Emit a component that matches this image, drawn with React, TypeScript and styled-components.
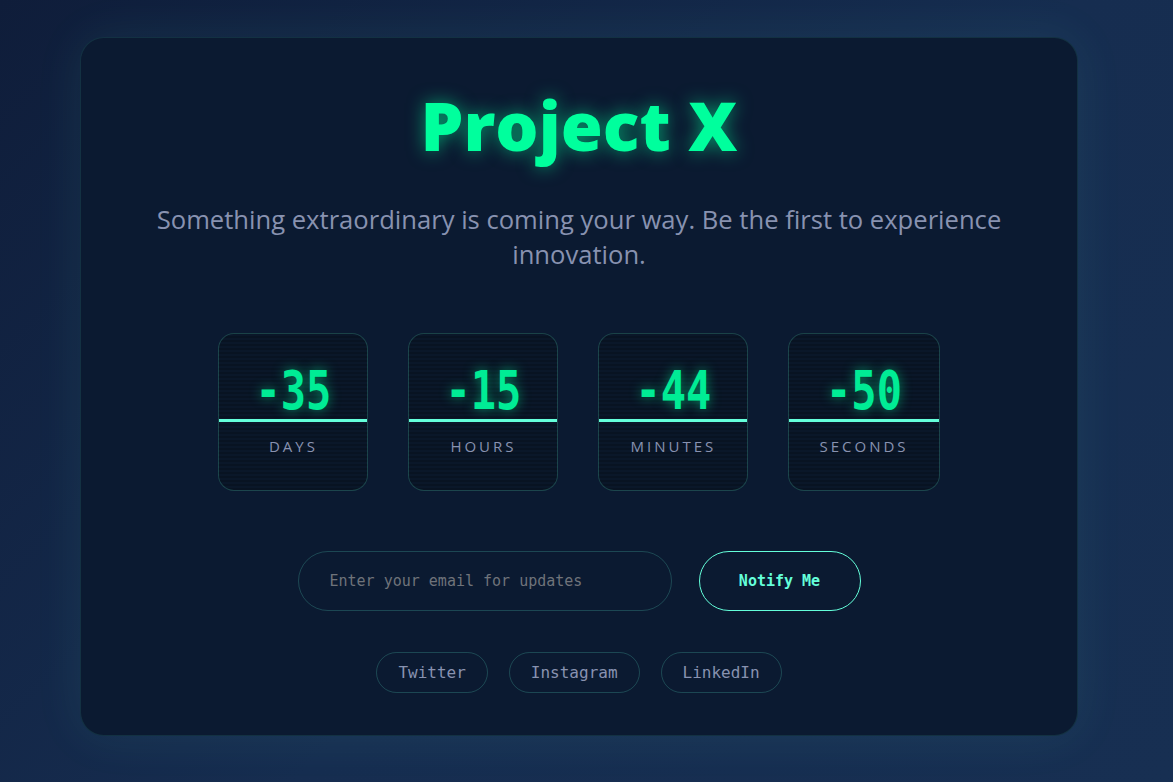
import React from "react";
import styled, { createGlobalStyle } from "styled-components";

const GlobalStyle = createGlobalStyle`
  html, body { margin: 0; padding: 0; }
  body {
    background: linear-gradient(135deg, #0f1d3a 0%, #162d50 55%, #172f52 100%);
    min-height: 100vh;
  }
  * { box-sizing: border-box; }
`;

const Page = styled.div`
  min-height: 100vh;
  display: flex;
  align-items: flex-start;
  padding: 37px 95px 48px 80px;
`;

const Card = styled.main`
  flex: 1;
  background: #0b1a31;
  border: 1px solid rgba(100, 255, 218, 0.1);
  border-radius: 24px;
  box-shadow: 0 0 50px rgba(100, 255, 218, 0.08);
  padding: 44px 60px 42px;
  display: flex;
  flex-direction: column;
  align-items: center;
  text-align: center;
`;

const Title = styled.h1`
  margin: 0;
  font-family: "Open Sans", "Noto Sans", sans-serif;
  font-weight: 800;
  font-size: 68px;
  line-height: 86px;
  color: #00ff9d;
  text-shadow: 0 0 18px rgba(0, 255, 157, 0.55);
`;

const Subtitle = styled.p`
  margin: 34px 0 0;
  max-width: 870px;
  font-family: "Open Sans", "Noto Sans", sans-serif;
  font-weight: 400;
  font-size: 25.6px;
  line-height: 35px;
  color: #8892b0;
`;

const Counters = styled.div`
  display: flex;
  gap: 40px;
  margin-top: 61px;
`;

const Box = styled.div`
  min-width: 150px;
  height: 158px;
  display: flex;
  flex-direction: column;
  border: 1px solid rgba(100, 255, 218, 0.2);
  border-radius: 16px;
  overflow: hidden;
  background:
    repeating-linear-gradient(0deg, rgba(0, 0, 0, 0.18) 0 2px, transparent 2px 4px),
    #0a1729;
`;

const Number = styled.div`
  height: 85px;
  display: flex;
  align-items: center;
  justify-content: center;
  padding-top: 28px;
`;

const Digits = styled.span`
  display: inline-block;
  font-family: "DejaVu Sans Mono", monospace;
  font-weight: 700;
  font-size: 42px;
  line-height: 1;
  color: #00ec95;
  transform: scaleY(1.25);
  text-shadow: 0 0 10px rgba(0, 255, 157, 0.5);
`;

const Divider = styled.div`
  height: 3px;
  background: #64ffda;
`;

const Label = styled.div`
  flex: 1;
  padding: 14px 30px 0;
  font-family: "Open Sans", "Noto Sans", sans-serif;
  font-size: 15px;
  letter-spacing: 3px;
  text-transform: uppercase;
  color: #8892b0;
`;

const Form = styled.form`
  display: flex;
  gap: 27px;
  margin-top: 60px;
`;

const Email = styled.input`
  width: 374px;
  height: 60px;
  border-radius: 30px;
  border: 1px solid rgba(100, 255, 218, 0.2);
  background: transparent;
  padding: 0 31px;
  font-family: "DejaVu Sans Mono", monospace;
  font-size: 15px;
  color: #ccd6f6;
  outline: none;
  &::placeholder { color: #6f737a; }
`;

const Notify = styled.button`
  width: 162px;
  height: 60px;
  border-radius: 30px;
  border: 1px solid #64ffda;
  background: transparent;
  font-family: "DejaVu Sans Mono", monospace;
  font-weight: 700;
  font-size: 15px;
  color: #64ffda;
  cursor: pointer;
`;

const Socials = styled.nav`
  display: flex;
  gap: 21px;
  margin-top: 41px;
`;

const Social = styled.a`
  height: 41px;
  display: flex;
  align-items: center;
  padding: 0 21px;
  border-radius: 21px;
  border: 1px solid rgba(100, 255, 218, 0.2);
  font-family: "DejaVu Sans Mono", monospace;
  font-size: 16px;
  color: #8892b0;
  text-decoration: none;
`;

const counters = [
  { value: "-35", label: "Days" },
  { value: "-15", label: "Hours" },
  { value: "-44", label: "Minutes" },
  { value: "-50", label: "Seconds" },
];

export default function App() {
  return (
    <>
      <GlobalStyle />
      <Page>
        <Card>
          <Title>Project X</Title>
          <Subtitle>
            Something extraordinary is coming your way. Be the first to experience innovation.
          </Subtitle>
          <Counters>
            {counters.map((c) => (
              <Box key={c.label}>
                <Number>
                  <Digits>{c.value}</Digits>
                </Number>
                <Divider />
                <Label>{c.label}</Label>
              </Box>
            ))}
          </Counters>
          <Form onSubmit={(e) => e.preventDefault()}>
            <Email type="email" placeholder="Enter your email for updates" />
            <Notify type="submit">Notify Me</Notify>
          </Form>
          <Socials>
            <Social href="#">Twitter</Social>
            <Social href="#">Instagram</Social>
            <Social href="#">LinkedIn</Social>
          </Socials>
        </Card>
      </Page>
    </>
  );
}
